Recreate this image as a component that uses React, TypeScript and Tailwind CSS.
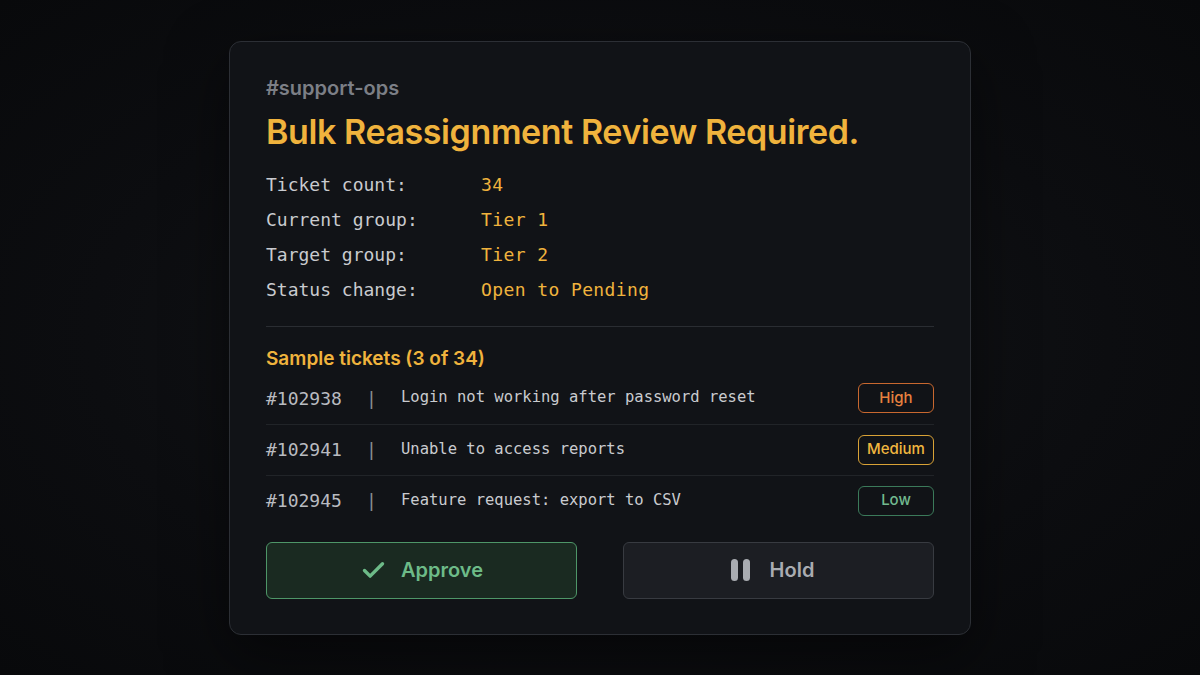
import { Check } from 'lucide-react'

const fields = [
  { label: 'Ticket count:', value: '34' },
  { label: 'Current group:', value: 'Tier 1' },
  { label: 'Target group:', value: 'Tier 2' },
  { label: 'Status change:', value: 'Open to Pending' },
]

type Priority = 'High' | 'Medium' | 'Low'

const tickets: { id: string; title: string; priority: Priority }[] = [
  { id: '#102938', title: 'Login not working after password reset', priority: 'High' },
  { id: '#102941', title: 'Unable to access reports', priority: 'Medium' },
  { id: '#102945', title: 'Feature request: export to CSV', priority: 'Low' },
]

const badgeStyles: Record<Priority, string> = {
  High: 'border-[#c8682f] text-[#e8813f]',
  Medium: 'border-[#d9a236] text-[#f0b63f]',
  Low: 'border-[#3b7a5a] text-[#72b98f]',
}

const sans = "font-['Inter','Noto_Sans',sans-serif]"
const mono = "font-['DejaVu_Sans_Mono','Liberation_Mono',monospace]"

export default function App() {
  return (
    <div className="min-h-screen w-full flex items-center justify-center bg-[radial-gradient(ellipse_at_center,#141619_0%,#0c0d10_60%,#08090b_100%)]">
      <div className={`w-[742px] rounded-xl border border-[#2c2f35] bg-[#111317] px-9 pt-[32px] pb-[35px] shadow-[0_20px_60px_rgba(0,0,0,0.5)] ${sans}`}>
        <p className="text-[20px] leading-7 font-semibold text-[#7c7f86]">#support-ops</p>
        <h1 className="mt-[10px] text-[34px] leading-10 font-semibold tracking-[-0.4px] text-[#f0b33d]">
          Bulk Reassignment Review Required.
        </h1>

        {/* summary fields */}
        <div className={`mt-[15px] ${mono} text-[18px]`}>
          {fields.map((f) => (
            <div key={f.label} className="flex h-[35px] items-center">
              <span className="w-[215px] text-[#c9cbcf]">{f.label}</span>
              <span className="tracking-[0.4px] text-[#f0b33d]">{f.value}</span>
            </div>
          ))}
        </div>

        <div className="mt-[19px] h-px bg-[#2a2d32]" />

        <h2 className="mt-[18px] text-[19px] leading-7 font-semibold text-[#f0b33d]">Sample tickets (3 of 34)</h2>

        {/* sample ticket rows */}
        <div>
          {tickets.map((t, i) => (
            <div
              key={t.id}
              className={`flex h-[51px] items-center ${i > 0 ? 'border-t border-[#212428]' : ''}`}
            >
              <span className={`${mono} text-[18px] text-[#b9bbc0] w-[100px]`}>{t.id}</span>
              <span className={`${mono} text-[18px] text-[#8a8d93] w-[35px]`}>|</span>
              <span className={`${mono} flex-1 text-[15.5px] text-[#c9cbcf]`}>{t.title}</span>
              <span
                className={`flex h-[30px] w-[76px] items-center justify-center rounded-md border-[1.5px] bg-[#111317] text-[15px] font-medium ${badgeStyles[t.priority]}`}
              >
                {t.priority}
              </span>
            </div>
          ))}
        </div>

        {/* actions */}
        <div className="mt-4 grid grid-cols-2 gap-[46px]">
          <button className="flex h-[57px] items-center justify-center gap-[14px] rounded-md border-[1.5px] border-[#4e9668] bg-[#1a2a21] text-[20px] font-semibold text-[#6dbb88]">
            <Check size={27} strokeWidth={3} />
            Approve
          </button>
          <button className="flex h-[57px] items-center justify-center gap-5 rounded-md border-[1.5px] border-[#383b41] bg-[#1c1e23] pr-3 text-[20px] font-semibold text-[#a9acb1]">
            <span className="flex gap-[5px]">
              <span className="h-[22px] w-[7px] rounded-sm bg-[#a9acb1]" />
              <span className="h-[22px] w-[7px] rounded-sm bg-[#a9acb1]" />
            </span>
            Hold
          </button>
        </div>
      </div>
    </div>
  )
}
